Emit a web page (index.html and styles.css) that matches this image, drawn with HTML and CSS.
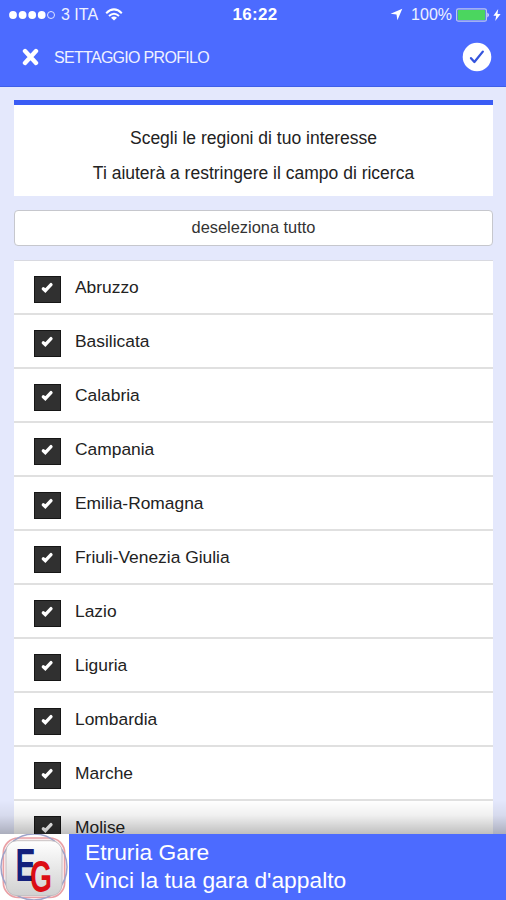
FILE: index.html
```html
<!DOCTYPE html>
<html lang="it">
<head>
  <meta charset="UTF-8">
  <meta name="viewport" content="width=device-width, initial-scale=1">
  <title>Settaggio profilo</title>
  <link rel="stylesheet" href="styles.css">
</head>
<body>

  <header class="header">
    <div class="status">
      <div class="status-left">
        <svg width="47" height="10" viewBox="0 0 47 10">
          <g fill="#fff">
            <circle cx="4" cy="5" r="3.9"/>
            <circle cx="13.6" cy="5" r="3.9"/>
            <circle cx="23.2" cy="5" r="3.9"/>
            <circle cx="32.7" cy="5" r="3.9"/>
          </g>
          <circle cx="42" cy="5" r="3.5" fill="none" stroke="#dfe4ff" stroke-width="1"/>
        </svg>
        <span class="carrier">3 ITA</span>
        <svg width="18" height="14" viewBox="0 0 18 14" fill="none" stroke="#fff" stroke-width="2">
          <path d="M1.2 5.2Q9-2.4 16.8 5.2"/>
          <path d="M4 8.1Q9 3.4 14 8.1"/>
          <path d="M9 12.6L6 9.7Q9 7.2 12 9.7Z" fill="#fff" stroke="none"/>
        </svg>
      </div>
      <div class="clock">16:22</div>
      <div class="status-right">
        <svg width="13" height="13" viewBox="0 0 13 13"><path d="M12.3 .7L7.4 12.2 6.5 6.6.6 5.7Z" fill="#fff"/></svg>
        <span class="percent">100%</span>
        <svg width="34" height="14" viewBox="0 0 34 14">
          <rect x=".6" y=".8" width="29.8" height="12.4" rx="1.8" fill="none" stroke="#bdc7ee" stroke-width="1.2"/>
          <rect x="1.8" y="2" width="27.4" height="10" rx=".8" fill="#4bd65f"/>
          <path d="M31.4 4.6Q34.4 7 31.4 9.4Z" fill="#dfe4ff"/>
        </svg>
        <svg class="bolt" width="8" height="12" viewBox="0 0 8 12"><path d="M5.2 0L.4 6.7H3.2L2.2 12 7.6 5H4.5Z" fill="#fff"/></svg>
      </div>
    </div>
    <div class="navbar">
      <svg class="close" width="17" height="18" viewBox="0 0 17 18"><path d="M3 3L14 15M14 3L3 15" stroke="#fff" stroke-width="4.4" stroke-linecap="round"/></svg>
      <h1>SETTAGGIO PROFILO</h1>
      <svg class="confirm" width="30" height="30" viewBox="0 0 30 30">
        <circle cx="15" cy="15" r="14.3" fill="#fff"/>
        <path d="M9 16.2L12.4 20L20.8 9.6" fill="none" stroke="#3454dd" stroke-width="2.3" stroke-linecap="round" stroke-linejoin="round"/>
      </svg>
    </div>
  </header>

  <main>
    <div class="intro">
      <p>Scegli le regioni di tuo interesse</p>
      <p>Ti aiuterà a restringere il campo di ricerca</p>
    </div>
    <button class="btn-deselect">deseleziona tutto</button>
    <ul class="regioni" id="regioni"></ul>
  </main>

  <footer class="banner">
    <div class="logo">
      <svg width="68" height="66" viewBox="0 0 68 66">
        <defs>
          <linearGradient id="tile" x1="0" y1="0" x2="0" y2="1">
            <stop offset="0" stop-color="#fff"/>
            <stop offset="1" stop-color="#d0d0d0"/>
          </linearGradient>
        </defs>
        <rect x="3.3" y="4" width="61.4" height="59.5" rx="15" fill="#fbecee" stroke="#e9a0a5" stroke-width="1.6"/>
        <circle cx="34" cy="33" r="33" fill="none" stroke="#9da3ca" stroke-width="1.5"/>
        <rect x="6" y="6.7" width="56" height="55" rx="11" fill="url(#tile)" stroke="#b9b5b7" stroke-width=".8"/>
        <text x="15.5" y="47" class="logo-e" textLength="20" lengthAdjust="spacingAndGlyphs">E</text>
        <text x="30" y="57.5" class="logo-g" textLength="22" lengthAdjust="spacingAndGlyphs">G</text>
      </svg>
    </div>
    <div class="banner-text">
      <div>Etruria Gare</div>
      <div>Vinci la tua gara d'appalto</div>
    </div>
  </footer>

  <script>
    const regioni = [
      'Abruzzo', 'Basilicata', 'Calabria', 'Campania', 'Emilia-Romagna',
      'Friuli-Venezia Giulia', 'Lazio', 'Liguria', 'Lombardia', 'Marche', 'Molise'
    ];
    const lista = document.getElementById('regioni');

    regioni.forEach(nome => {
      const voce = document.createElement('li');
      voce.innerHTML = `
        <span class="check">
          <svg width="27" height="27" viewBox="0 0 27 27"><path d="M9.3 12.8L11.3 14.6L17 8.6" fill="none" stroke="#fff" stroke-width="3.3" stroke-linecap="round"/></svg>
        </span>
        <span class="nome">${nome}</span>
      `;
      lista.appendChild(voce);
    });
  </script>

</body>
</html>
```
FILE: styles.css
```css
* {
  box-sizing: border-box;
}

body {
  margin: 0;
  height: 900px;
  overflow: hidden;
  display: flex;
  flex-direction: column;
  font-family: "Liberation Sans", Arial, sans-serif;
  background-color: #e4e8fc;
  color: #222;
}

svg {
  display: block;
  flex: none;
}

/* Barra superiore */
.header {
  flex: none;
  height: 87px;
  background-color: #4c6bff;
  border-bottom: 1px solid #3f5fe8;
  color: #fff;
}

.status {
  display: grid;
  grid-template-columns: 1fr auto 1fr;
  align-items: center;
  height: 29px;
  padding: 0 5px 0 9px;
}

.status-left,
.status-right {
  display: flex;
  align-items: center;
}

.status-right {
  justify-content: flex-end;
}

.carrier {
  font-size: 16px;
  margin: 0 7px 0 5px;
  color: #eef1ff;
}

.clock {
  font-size: 17px;
  font-weight: bold;
  letter-spacing: 0.3px;
}

.percent {
  font-size: 16px;
  margin: 0 4px 0 8px;
  color: #eef1ff;
}

.bolt {
  margin-left: 3px;
}

.navbar {
  display: flex;
  align-items: center;
  height: 56px;
  padding: 0 14px 0 22px;
}

.navbar h1 {
  flex: 1;
  margin: 1px 0 0 15px;
  font-size: 16px;
  font-weight: normal;
  letter-spacing: -0.7px;
  color: #eef1ff;
}

/* Contenuto */
main {
  flex: 1;
  min-height: 0;
  overflow: hidden;
  padding: 13px 13px 0 14px;
}

.intro {
  height: 96px;
  padding-top: 16px;
  background-color: #fff;
  border-top: 5px solid #3a5cf5;
  text-align: center;
}

.intro p {
  margin: 0;
  font-size: 17.5px;
  line-height: 35px;
}

.btn-deselect {
  display: block;
  width: 100%;
  height: 36px;
  margin: 14px 0;
  padding: 0 0 1px;
  border: 1px solid #c6c7cd;
  border-radius: 4px;
  background-color: #fff;
  font-family: inherit;
  font-size: 16.4px;
  color: #333;
}

.regioni {
  margin: 0;
  padding: 0;
  list-style: none;
  background-color: #fff;
  border-top: 1px solid #d8d9e0;
}

.regioni li {
  display: flex;
  align-items: center;
  height: 54px;
  padding: 4px 20px 0;
  border-bottom: 2px solid #e0e0e0;
}

.check {
  width: 27px;
  height: 27px;
  background-color: #303030;
  border: 1px solid #161616;
}

.check svg {
  margin: -1px;
}

.nome {
  margin: -4px 0 0 14px;
  font-size: 17.4px;
  line-height: 18px;
}

/* Banner in basso */
.banner {
  position: relative;
  flex: none;
  display: flex;
  height: 66px;
  background-color: #4c6bff;
  color: #fff;
}

.banner::before {
  content: "";
  position: absolute;
  left: 0;
  right: 0;
  bottom: 100%;
  height: 34px;
  background: linear-gradient(rgba(0, 0, 0, 0), rgba(0, 0, 0, 0.06) 45%, rgba(0, 0, 0, 0.25));
}

.logo {
  width: 69px;
  background-color: #fff;
}

.logo-e,
.logo-g {
  font-family: "Liberation Sans", Arial, sans-serif;
  font-weight: bold;
}

.logo-e {
  font-size: 47px;
  fill: #14207c;
}

.logo-g {
  font-size: 45px;
  fill: #dc0d14;
}

.banner-text {
  padding: 4px 0 0 16px;
  font-size: 22.8px;
  line-height: 28px;
}
```
